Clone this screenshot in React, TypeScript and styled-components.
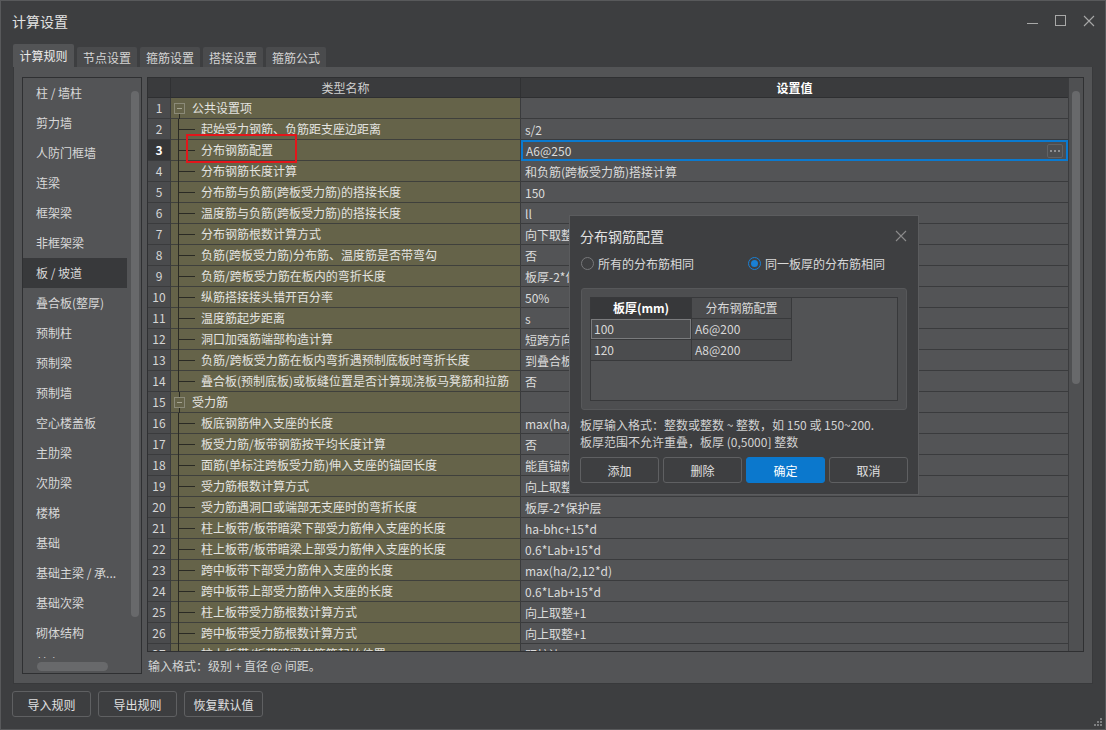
import React from 'react';
import styled, { createGlobalStyle } from 'styled-components';

const GlobalStyle = createGlobalStyle`
  html, body {
    margin: 0;
    padding: 0;
    background: #3d3e40;
  }
  body {
    font-family: "Microsoft YaHei", "Noto Sans CJK SC", "Noto Sans", sans-serif;
    font-size: 12px;
    color: #dcdcdc;
  }
  * {
    box-sizing: border-box;
  }
`;

const Window = styled.div`
  position: relative;
  width: 1106px;
  height: 730px;
  background: #3d3e40;
  border: 1px solid #58595b;
  display: flex;
  flex-direction: column;
  overflow: hidden;
`;

const TitleBar = styled.div`
  height: 39px;
  display: flex;
  align-items: center;
  justify-content: space-between;
  padding: 0 10px 0 11px;
`;

const Title = styled.div`
  font-size: 14px;
  color: #e2e2e2;
`;

const Controls = styled.div`
  display: flex;
  gap: 16px;
  align-items: center;
  color: #a8a8a8;
`;

const TabRow = styled.div`
  display: flex;
  align-items: flex-end;
  gap: 3px;
  height: 23px;
  margin: 4px 0 0 12px;
`;

const Tab = styled.div<{ $active?: boolean }>`
  width: ${(p) => (p.$active ? 61 : 60)}px;
  height: ${(p) => (p.$active ? 23 : 20)}px;
  display: flex;
  align-items: center;
  justify-content: center;
  background: ${(p) => (p.$active ? '#535456' : '#4a4b4d')};
  color: ${(p) => (p.$active ? '#ececec' : '#d4d4d4')};
  border-radius: 2px 2px 0 0;
`;

const Panel = styled.div`
  margin: 0 12px;
  height: 617px;
  background: #535456;
  border: 1px solid #38393b;
  border-top: none;
  padding: 10px 8px 0 8px;
  display: flex;
  gap: 5px;
`;

const ListBox = styled.div`
  width: 120px;
  height: 597px;
  border: 1px solid #2f3032;
  background: #535456;
  display: grid;
  grid-template-columns: 105px 13px;
  grid-template-rows: 1fr 15px;
`;

const ListViewport = styled.div`
  overflow: hidden;
`;

const ListItem = styled.div<{ $selected?: boolean }>`
  width: 104px;
  height: 30px;
  line-height: 30px;
  padding-left: 13px;
  white-space: nowrap;
  overflow: hidden;
  color: #d8d8d8;
  background: ${(p) => (p.$selected ? '#38393b' : 'transparent')};
`;

const VTrack = styled.div<{ $pad: number; $h: number }>`
  padding-top: ${(p) => p.$pad}px;
  display: flex;
  justify-content: center;

  &::before {
    content: '';
    display: block;
    width: 8px;
    height: ${(p) => p.$h}px;
    border-radius: 4px;
    background: #68696b;
  }
`;

const HTrack = styled.div`
  grid-column: 1 / span 2;
  padding: 4px 0 0 14px;

  &::before {
    content: '';
    display: block;
    width: 71px;
    height: 9px;
    border-radius: 5px;
    background: #68696b;
  }
`;

const RightArea = styled.div`
  width: 937px;
  display: flex;
  flex-direction: column;
`;

const Grid = styled.div`
  height: 575px;
  border: 1px solid #2f3032;
  display: flex;
`;

const Table = styled.div`
  width: 920px;
  display: flex;
  flex-direction: column;
`;

const GridScroll = styled(VTrack)`
  width: 15px;
  background: #4f5052;
  border-left: 1px solid #3b3c3e;
`;

const HeadRow = styled.div`
  display: grid;
  grid-template-columns: 23px 350px 547px;
  height: 20px;
  background: #3a3b3d;
  border-bottom: 1px solid #2e2f31;
`;

const HeadCell = styled.div<{ $bold?: boolean }>`
  line-height: 19px;
  text-align: center;
  border-right: 1px solid #303133;
  color: ${(p) => (p.$bold ? '#ffffff' : '#cfcfcf')};
  font-weight: ${(p) => (p.$bold ? 700 : 400)};

  &:last-child {
    border-right: none;
  }
`;

const Body = styled.div`
  flex: 1;
  overflow: hidden;
`;

const Row = styled.div`
  display: grid;
  grid-template-columns: 23px 350px 547px;
  height: 21px;
`;

const NumCell = styled.div<{ $active?: boolean }>`
  text-align: center;
  line-height: 20px;
  background: ${(p) => (p.$active ? '#353638' : '#4a4b4d')};
  color: ${(p) => (p.$active ? '#ffffff' : '#d6d6d6')};
  font-weight: ${(p) => (p.$active ? 700 : 400)};
  border-right: 1px solid #3a3b3d;
  border-bottom: 1px solid #3a3b3d;
`;

const TypeCell = styled.div`
  display: flex;
  background: #656349;
  border-right: 1px solid #3a3b3d;
  border-bottom: 1px solid #3f403c;
  color: #e4e4e0;
  line-height: 20px;
  white-space: nowrap;
`;

const Gutter = styled.span<{ $w: number }>`
  width: ${(p) => p.$w}px;
  flex-shrink: 0;
`;

const Branch = styled.span`
  width: 17px;
  flex-shrink: 0;
  align-self: stretch;
  margin-bottom: -1px;
  border-left: 1px solid #2a2a24;
  background: linear-gradient(#2a2a24, #2a2a24) no-repeat 0 10px / 16px 1px;
`;

const ExpanderCol = styled.span`
  width: 11px;
  flex-shrink: 0;
  align-self: stretch;
  margin-bottom: -1px;
  display: flex;
  flex-direction: column;
  align-items: center;
`;

const Stem = styled.span<{ $show?: boolean }>`
  flex: 1;
  width: 1px;
  background: ${(p) => (p.$show ? '#2a2a24' : 'transparent')};
`;

const Expander = styled.span`
  width: 11px;
  height: 11px;
  flex-shrink: 0;
  border: 1px solid #8b8a78;
  display: flex;
  align-items: center;
  justify-content: center;

  &::before {
    content: '';
    width: 5px;
    height: 1px;
    background: #a6a592;
  }
`;

const Label = styled.span<{ $pad: number }>`
  padding-left: ${(p) => p.$pad}px;
`;

const ValueCell = styled.div<{ $editing?: boolean }>`
  display: flex;
  align-items: center;
  justify-content: space-between;
  background: #535456;
  border-bottom: 1px solid #3a3b3d;
  padding: 0 3px 0 ${(p) => (p.$editing ? 3 : 4)}px;
  color: #dcdcdc;
  white-space: nowrap;
  overflow: hidden;
  ${(p) => (p.$editing ? 'border: 2px solid #0a7ad0; background: #4d4e50;' : '')}
`;

const MoreButton = styled.span`
  width: 16px;
  height: 14px;
  border: 1px solid #616264;
  border-radius: 2px;
  display: flex;
  align-items: center;
  justify-content: center;
  gap: 2px;

  i {
    width: 2px;
    height: 2px;
    background: #8f9092;
  }
`;

const HelpText = styled.div`
  padding: 4px 0 0 1px;
  line-height: 20px;
  color: #d4d4d4;
`;

const Footer = styled.div`
  display: flex;
  gap: 7px;
  margin: 7px 0 0 11px;
`;

const Button = styled.button<{ $primary?: boolean }>`
  width: 79px;
  height: 26px;
  border: 1px solid ${(p) => (p.$primary ? '#0b78cd' : '#5f6062')};
  border-radius: 3px;
  background: ${(p) => (p.$primary ? '#0b78cd' : 'transparent')};
  color: ${(p) => (p.$primary ? '#ffffff' : '#e0e0e0')};
  font-family: inherit;
  font-size: 12px;
  padding: 0;
`;

const Highlight = styled.div`
  position: absolute;
  left: 185px;
  top: 133px;
  width: 111px;
  height: 29px;
  border: 2px solid #e3161b;
`;

const Dialog = styled.div`
  position: absolute;
  left: 568px;
  top: 214px;
  width: 350px;
  height: 280px;
  background: #3e3f41;
  border: 1px solid #5b5c5e;
  padding: 0 10px;
  display: flex;
  flex-direction: column;
`;

const DialogHead = styled.div`
  height: 39px;
  display: flex;
  align-items: center;
  justify-content: space-between;
  padding-right: 1px;
  color: #8c8c8c;
`;

const DialogTitle = styled.div`
  font-size: 14px;
  color: #e2e2e2;
`;

const RadioRow = styled.div`
  display: flex;
  height: 16px;
  align-items: center;
  padding-left: 1px;
`;

const RadioItem = styled.label<{ $w?: number }>`
  display: flex;
  align-items: center;
  gap: 4px;
  width: ${(p) => (p.$w ? `${p.$w}px` : 'auto')};
  color: #dadada;
`;

const RadioDot = styled.span<{ $checked?: boolean }>`
  width: 13px;
  height: 13px;
  border-radius: 50%;
  border: 1px solid ${(p) => (p.$checked ? '#1a80d4' : '#77787a')};
  display: flex;
  align-items: center;
  justify-content: center;

  &::before {
    content: '';
    width: 7px;
    height: 7px;
    border-radius: 50%;
    background: ${(p) => (p.$checked ? '#1a80d4' : 'transparent')};
  }
`;

const GroupBox = styled.div`
  margin: 17px 1px 0;
  height: 122px;
  background: #4d4e50;
  border: 1px solid #57585a;
  border-radius: 3px;
  padding: 8px;
`;

const ThickTable = styled.div`
  height: 104px;
  border: 1px solid #38393b;
  background: #525355;
  display: grid;
  grid-template-columns: 101px 100px;
  grid-auto-rows: 21px;
  align-content: start;
`;

const TCell = styled.div<{ $head?: boolean; $primary?: boolean; $current?: boolean }>`
  line-height: 20px;
  border-right: 1px solid #38393b;
  border-bottom: 1px solid #38393b;
  padding-left: ${(p) => (p.$head ? 0 : 3)}px;
  text-align: ${(p) => (p.$head ? 'center' : 'left')};
  background: ${(p) => (p.$primary ? '#37383a' : '#4b4c4e')};
  color: ${(p) => (p.$primary ? '#ffffff' : '#d8d8d8')};
  font-weight: ${(p) => (p.$primary ? 700 : 400)};
  box-shadow: ${(p) => (p.$current ? 'inset 0 0 0 1px #7a7b7d' : 'none')};
`;

const Info = styled.div`
  margin-top: 6px;
  line-height: 17px;
  color: #d2d2d2;
`;

const DialogButtons = styled.div`
  display: flex;
  gap: 4px;
  margin-top: 7px;
`;

const Grip = styled.svg`
  position: absolute;
  right: 2px;
  bottom: 2px;
`;

type Item = { n: number; name: string; value: string; group?: boolean };

const rows: Item[] = [
  { n: 1, name: '公共设置项', value: '', group: true },
  { n: 2, name: '起始受力钢筋、负筋距支座边距离', value: 's/2' },
  { n: 3, name: '分布钢筋配置', value: 'A6@250' },
  { n: 4, name: '分布钢筋长度计算', value: '和负筋(跨板受力筋)搭接计算' },
  { n: 5, name: '分布筋与负筋(跨板受力筋)的搭接长度', value: '150' },
  { n: 6, name: '温度筋与负筋(跨板受力筋)的搭接长度', value: 'll' },
  { n: 7, name: '分布钢筋根数计算方式', value: '向下取整+1' },
  { n: 8, name: '负筋(跨板受力筋)分布筋、温度筋是否带弯勾', value: '否' },
  { n: 9, name: '负筋/跨板受力筋在板内的弯折长度', value: '板厚-2*保护层' },
  { n: 10, name: '纵筋搭接接头错开百分率', value: '50%' },
  { n: 11, name: '温度筋起步距离', value: 's' },
  { n: 12, name: '洞口加强筋端部构造计算', value: '短跨方向锚固，长跨方向锚固' },
  { n: 13, name: '负筋/跨板受力筋在板内弯折遇预制底板时弯折长度', value: '到叠合板(预制底板)顶' },
  { n: 14, name: '叠合板(预制底板)或板缝位置是否计算现浇板马凳筋和拉筋', value: '否' },
  { n: 15, name: '受力筋', value: '', group: true },
  { n: 16, name: '板底钢筋伸入支座的长度', value: 'max(ha/2,5*d)' },
  { n: 17, name: '板受力筋/板带钢筋按平均长度计算', value: '否' },
  { n: 18, name: '面筋(单标注跨板受力筋)伸入支座的锚固长度', value: '能直锚就直锚，否则按公式计算' },
  { n: 19, name: '受力筋根数计算方式', value: '向上取整+1' },
  { n: 20, name: '受力筋遇洞口或端部无支座时的弯折长度', value: '板厚-2*保护层' },
  { n: 21, name: '柱上板带/板带暗梁下部受力筋伸入支座的长度', value: 'ha-bhc+15*d' },
  { n: 22, name: '柱上板带/板带暗梁上部受力筋伸入支座的长度', value: '0.6*Lab+15*d' },
  { n: 23, name: '跨中板带下部受力筋伸入支座的长度', value: 'max(ha/2,12*d)' },
  { n: 24, name: '跨中板带上部受力筋伸入支座的长度', value: '0.6*Lab+15*d' },
  { n: 25, name: '柱上板带受力筋根数计算方式', value: '向上取整+1' },
  { n: 26, name: '跨中板带受力筋根数计算方式', value: '向上取整+1' },
  { n: 27, name: '柱上板带/板带暗梁的箍筋起始位置', value: '距柱边50mm' },
];

const categories = [
  '柱 / 墙柱',
  '剪力墙',
  '人防门框墙',
  '连梁',
  '框架梁',
  '非框架梁',
  '板 / 坡道',
  '叠合板(整厚)',
  '预制柱',
  '预制梁',
  '预制墙',
  '空心楼盖板',
  '主肋梁',
  '次肋梁',
  '楼梯',
  '基础',
  '基础主梁 / 承...',
  '基础次梁',
  '砌体结构',
  '其它',
];

const tabs = ['计算规则', '节点设置', '箍筋设置', '搭接设置', '箍筋公式'];

function TypeContent({ item }: { item: Item }) {
  if (item.group) {
    return (
      <>
        <Gutter $w={3} />
        <ExpanderCol>
          <Stem $show={item.n !== 1} />
          <Expander />
          <Stem $show />
        </ExpanderCol>
        <Label $pad={7}>{item.name}</Label>
      </>
    );
  }
  return (
    <>
      <Gutter $w={7} />
      <Branch />
      <Label $pad={6}>{item.name}</Label>
    </>
  );
}

export default function App() {
  return (
    <>
      <GlobalStyle />
      <Window>
        <TitleBar>
          <Title>计算设置</Title>
          <Controls>
            <svg width="12" height="12" viewBox="0 0 12 12">
              <line x1="0" y1="8.5" x2="11" y2="8.5" stroke="currentColor" strokeWidth="1" />
            </svg>
            <svg width="12" height="12" viewBox="0 0 12 12">
              <rect x="0.5" y="0.5" width="10" height="10" fill="none" stroke="currentColor" strokeWidth="1" />
            </svg>
            <svg width="12" height="12" viewBox="0 0 12 12">
              <path d="M1 1 L11 11 M11 1 L1 11" stroke="currentColor" strokeWidth="1.1" />
            </svg>
          </Controls>
        </TitleBar>

        <TabRow>
          {tabs.map((t, i) => (
            <Tab key={t} $active={i === 0}>
              {t}
            </Tab>
          ))}
        </TabRow>

        <Panel>
          <ListBox>
            <ListViewport>
              {categories.map((c) => (
                <ListItem key={c} $selected={c === '板 / 坡道'}>
                  {c}
                </ListItem>
              ))}
            </ListViewport>
            <VTrack $pad={13} $h={526} />
            <HTrack />
          </ListBox>

          <RightArea>
            <Grid>
              <Table>
                <HeadRow>
                  <HeadCell />
                  <HeadCell>类型名称</HeadCell>
                  <HeadCell $bold>设置值</HeadCell>
                </HeadRow>
                <Body>
                  {rows.map((r) => (
                    <Row key={r.n}>
                      <NumCell $active={r.n === 3}>{r.n}</NumCell>
                      <TypeCell>
                        <TypeContent item={r} />
                      </TypeCell>
                      <ValueCell $editing={r.n === 3}>
                        <span>{r.value}</span>
                        {r.n === 3 && (
                          <MoreButton>
                            <i />
                            <i />
                            <i />
                          </MoreButton>
                        )}
                      </ValueCell>
                    </Row>
                  ))}
                </Body>
              </Table>
              <GridScroll $pad={13} $h={293} />
            </Grid>
            <HelpText>输入格式：级别 + 直径 @ 间距。</HelpText>
          </RightArea>
        </Panel>

        <Footer>
          <Button>导入规则</Button>
          <Button>导出规则</Button>
          <Button>恢复默认值</Button>
        </Footer>

        <Highlight />

        <Dialog>
          <DialogHead>
            <DialogTitle>分布钢筋配置</DialogTitle>
            <svg width="12" height="12" viewBox="0 0 12 12">
              <path d="M1 1 L11 11 M11 1 L1 11" stroke="currentColor" strokeWidth="1.1" />
            </svg>
          </DialogHead>
          <RadioRow>
            <RadioItem $w={167}>
              <RadioDot />
              所有的分布筋相同
            </RadioItem>
            <RadioItem>
              <RadioDot $checked />
              同一板厚的分布筋相同
            </RadioItem>
          </RadioRow>
          <GroupBox>
            <ThickTable>
              <TCell $head $primary>板厚(mm)</TCell>
              <TCell $head>分布钢筋配置</TCell>
              <TCell $current>100</TCell>
              <TCell>A6@200</TCell>
              <TCell>120</TCell>
              <TCell>A8@200</TCell>
            </ThickTable>
          </GroupBox>
          <Info>
            板厚输入格式：整数或整数 ~ 整数，如 150 或 150~200.
            <br />
            板厚范围不允许重叠，板厚 (0,5000] 整数
          </Info>
          <DialogButtons>
            <Button>添加</Button>
            <Button>删除</Button>
            <Button $primary>确定</Button>
            <Button>取消</Button>
          </DialogButtons>
        </Dialog>

        <Grip width="9" height="9" viewBox="0 0 9 9">
          <g fill="#7d7e80">
            <rect x="6" y="0" width="2" height="2" />
            <rect x="3" y="3" width="2" height="2" />
            <rect x="6" y="3" width="2" height="2" />
            <rect x="0" y="6" width="2" height="2" />
            <rect x="3" y="6" width="2" height="2" />
            <rect x="6" y="6" width="2" height="2" />
          </g>
        </Grip>
      </Window>
    </>
  );
}
